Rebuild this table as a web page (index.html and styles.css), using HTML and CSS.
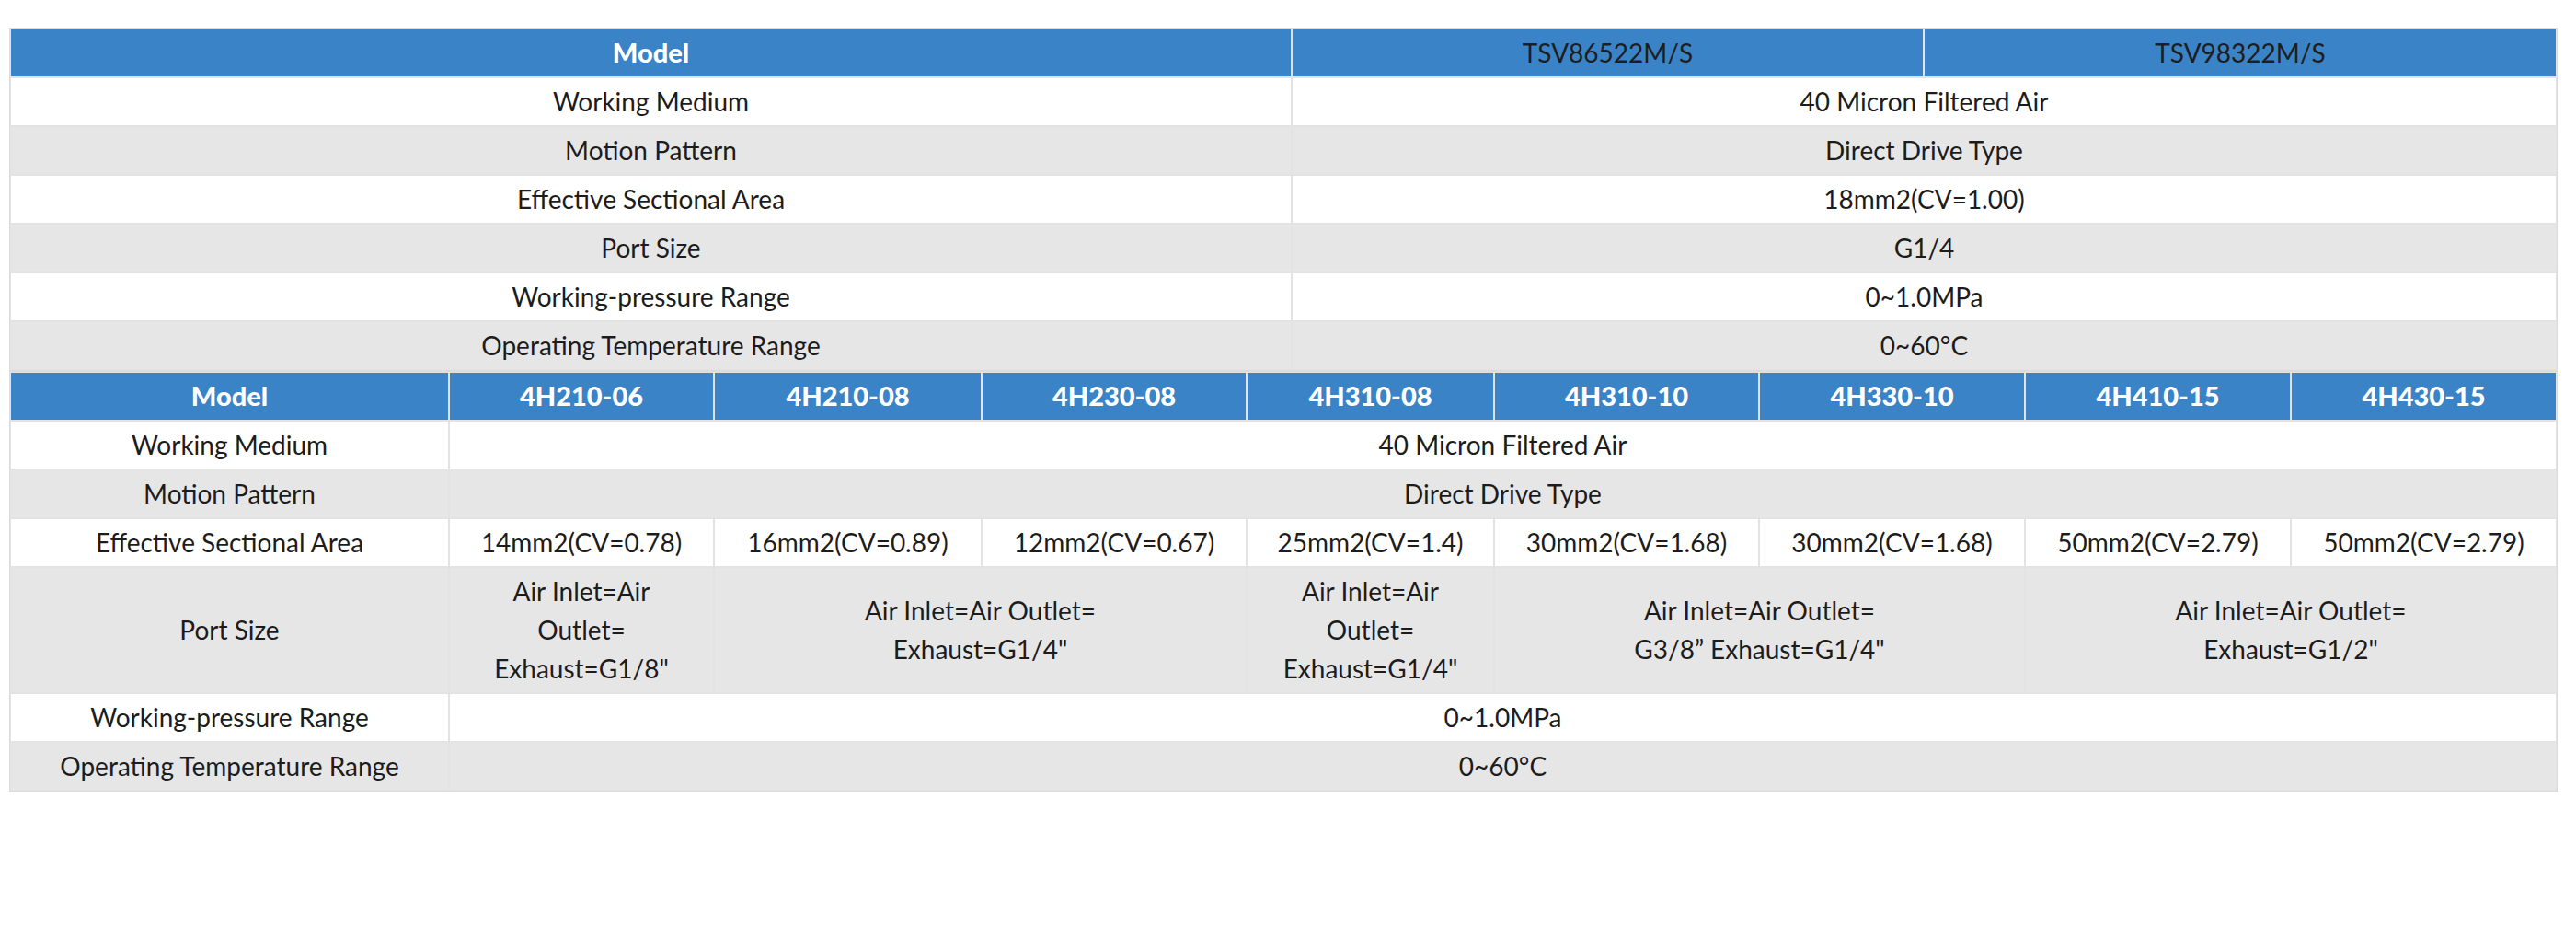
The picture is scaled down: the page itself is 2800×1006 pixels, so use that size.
FILE: index.html
```html
<!DOCTYPE html>
<html lang="en">
<head>
<meta charset="utf-8">
<title>Specifications</title>
<link rel="stylesheet" href="styles.css">
</head>
<body>
<div class="page">
  <table class="spec spec-top">
    <colgroup>
      <col class="c-top-label">
      <col class="c-top-val">
      <col class="c-top-val2">
    </colgroup>
    <tr class="head">
      <th class="th-main">Model</th>
      <th class="th-dark">TSV86522M/S</th>
      <th class="th-dark">TSV98322M/S</th>
    </tr>
    <tr class="odd"><td>Working Medium</td><td colspan="2">40 Micron Filtered Air</td></tr>
    <tr class="even"><td>Motion Pattern</td><td colspan="2">Direct Drive Type</td></tr>
    <tr class="odd"><td>Effective Sectional Area</td><td colspan="2">18mm2(CV=1.00)</td></tr>
    <tr class="even"><td>Port Size</td><td colspan="2">G1/4</td></tr>
    <tr class="odd"><td>Working-pressure Range</td><td colspan="2">0~1.0MPa</td></tr>
    <tr class="even"><td>Operating Temperature Range</td><td colspan="2">0~60°C</td></tr>
  </table>

  <table class="spec spec-bottom">
    <colgroup>
      <col class="c-label">
      <col class="c-288">
      <col class="c-291">
      <col class="c-288">
      <col class="c-269">
      <col class="c-288">
      <col class="c-289">
      <col class="c-289">
      <col class="c-289">
    </colgroup>
    <tr class="head">
      <th class="th-main">Model</th>
      <th class="th-main">4H210-06</th>
      <th class="th-main">4H210-08</th>
      <th class="th-main">4H230-08</th>
      <th class="th-main">4H310-08</th>
      <th class="th-main">4H310-10</th>
      <th class="th-main">4H330-10</th>
      <th class="th-main">4H410-15</th>
      <th class="th-main">4H430-15</th>
    </tr>
    <tr class="odd"><td>Working Medium</td><td colspan="8">40 Micron Filtered Air</td></tr>
    <tr class="even"><td>Motion Pattern</td><td colspan="8">Direct Drive Type</td></tr>
    <tr class="odd">
      <td>Effective Sectional Area</td>
      <td>14mm2(CV=0.78)</td>
      <td>16mm2(CV=0.89)</td>
      <td>12mm2(CV=0.67)</td>
      <td>25mm2(CV=1.4)</td>
      <td>30mm2(CV=1.68)</td>
      <td>30mm2(CV=1.68)</td>
      <td>50mm2(CV=2.79)</td>
      <td>50mm2(CV=2.79)</td>
    </tr>
    <tr class="even">
      <td>Port Size</td>
      <td>Air Inlet=Air<br>Outlet=<br>Exhaust=G1/8"</td>
      <td colspan="2">Air Inlet=Air Outlet=<br>Exhaust=G1/4"</td>
      <td>Air Inlet=Air<br>Outlet=<br>Exhaust=G1/4"</td>
      <td colspan="2">Air Inlet=Air Outlet=<br>G3/8” Exhaust=G1/4"</td>
      <td colspan="2">Air Inlet=Air Outlet=<br>Exhaust=G1/2"</td>
    </tr>
    <tr class="odd"><td>Working-pressure Range</td><td colspan="8">0~1.0MPa</td></tr>
    <tr class="even"><td>Operating Temperature Range</td><td colspan="8">0~60°C</td></tr>
  </table>
</div>
</body>
</html>
```

FILE: styles.css
```css
html, body {
  margin: 0;
  padding: 0;
  background: #ffffff;
}

.page {
  padding: 30px 0 0 10px;
}

.spec {
  box-sizing: border-box;
  width: 2770px;
  table-layout: fixed;
  border-collapse: separate;
  border-spacing: 0;
  border: 1px solid #dcdcdc;
  font-family: Lato, "Open Sans", "Noto Sans", sans-serif;
  font-size: 28px;
  color: #1c1c1c;
}

.spec th,
.spec td {
  border: 1px solid #e3e3e3;
  padding: 4px 6px 5px;
  line-height: 42px;
  text-align: center;
  vertical-align: middle;
  font-weight: normal;
}

.head th {
  background: #3a83c7;
}

.th-main {
  color: #ffffff;
  font-size: 29px;
  font-weight: 900 !important;
}

.th-dark {
  color: #1e1e1e;
}

.odd td {
  background: #ffffff;
}

.even td {
  background: #e6e6e6;
}

.c-top-label { width: 1393px; }
.c-top-val { width: 687px; }
.c-top-val2 { width: 688px; }

.c-label { width: 477px; }
.c-288 { width: 288px; }
.c-291 { width: 291px; }
.c-269 { width: 269px; }
.c-289 { width: 289px; }
```
